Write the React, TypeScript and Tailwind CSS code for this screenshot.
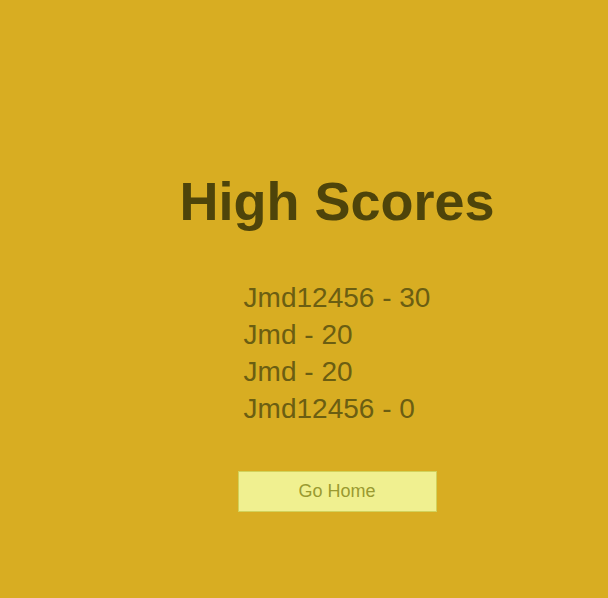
import React from 'react';

const scores = [
  { name: 'Jmd12456', score: 30 },
  { name: 'Jmd', score: 20 },
  { name: 'Jmd', score: 20 },
  { name: 'Jmd12456', score: 0 },
];

const App: React.FC = () => {
  return (
    <div className="min-h-[598px] w-full bg-[#d8ad22] font-['Liberation_Sans',Arial,sans-serif] pl-[66px]">
      <div className="flex flex-col items-center pt-[170px]">
        {/* Title */}
        <h1 className="text-[54px] leading-[62px] font-bold text-[#4e440a]">High Scores</h1>

        {/* Score list */}
        <ul className="mt-[47px] text-[28px] leading-[37px] text-[#6b5e12]">
          {scores.map((s, i) => (
            <li key={i}>
              {s.name} - {s.score}
            </li>
          ))}
        </ul>

        <button className="mt-[44px] w-[199px] h-[41px] border border-[#d2d25a] bg-[#f0f090] text-[18px] text-[#9a9a30]">
          Go Home
        </button>
      </div>
    </div>
  );
};

export default App;
